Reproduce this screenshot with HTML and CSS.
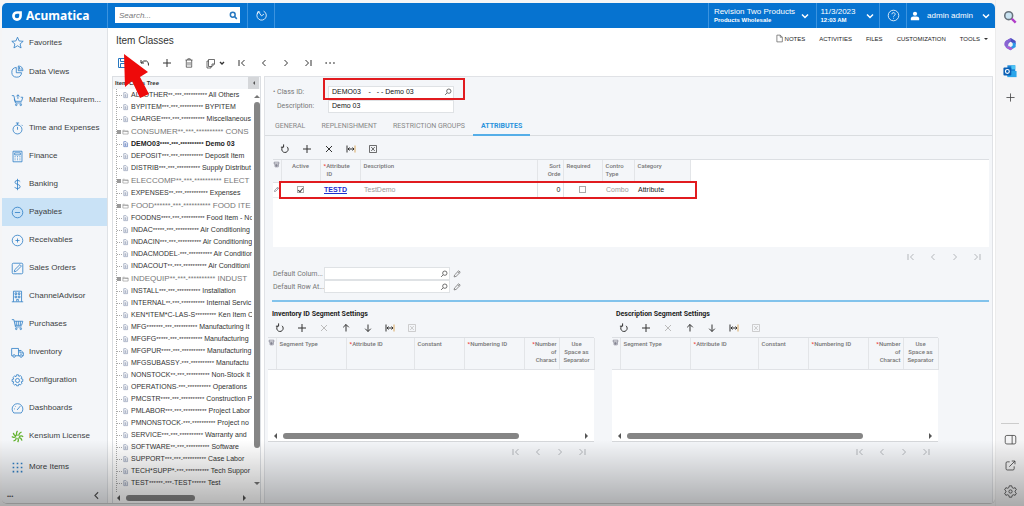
FILE: index.html
```
<!DOCTYPE html>
<html lang="en">
<head>
<meta charset="utf-8">
<title>Item Classes - Acumatica</title>
<link rel="stylesheet" href="styles.css">
</head>
<body>
<svg class="sprite" aria-hidden="true">
  <symbol id="plus" viewBox="0 0 12 12"><path d="M6 2v8M2 6h8"/></symbol>
  <symbol id="cross" viewBox="0 0 12 12"><path d="M3 3l6 6M9 3l-6 6"/></symbol>
  <symbol id="refresh" viewBox="0 0 12 12"><path d="M4.2 3.6a3.2 3.2 0 1 0 3.8.2M4.6 1.4v2.8H1.9"/></symbol>
  <symbol id="up" viewBox="0 0 12 12"><path d="M6 9.5v-7M3.2 5.3L6 2.5l2.800 2.800"/></symbol>
  <symbol id="down" viewBox="0 0 12 12"><path d="M6 2.500v7M3.200 6.700L6 9.500l2.800-2.800"/></symbol>
  <symbol id="fit" viewBox="0 0 12 12"><path d="M2 2.500v7M3 6h6M4.500 4.500L3 6l1.500 1.500M7.500 4.500L9 6 7.500 7.500"/><path class="amber" d="M10 2.500v7"/></symbol>
  <symbol id="excel" viewBox="0 0 12 12"><path stroke-width=".7" d="M2.500 2.500h7v7h-7zM4.200 4l3.600 4M7.800 4L4.200 8"/></symbol>
  <symbol id="first" viewBox="0 0 12 12"><path d="M3 3v6M8.500 3l-3 3 3 3"/></symbol>
  <symbol id="prev" viewBox="0 0 12 12"><path d="M7.500 3l-3 3 3 3"/></symbol>
  <symbol id="next" viewBox="0 0 12 12"><path d="M4.500 3l3 3-3 3"/></symbol>
  <symbol id="last" viewBox="0 0 12 12"><path d="M9 3v6M3.500 3l3 3-3 3"/></symbol>
  <symbol id="chev" viewBox="0 0 12 12"><path d="M3 4.500l3 3 3-3"/></symbol>
  <symbol id="lens" viewBox="0 0 12 12"><circle cx="7" cy="5" r="2.600"/><path d="M5 7L2.500 9.500"/></symbol>
  <symbol id="pencil" viewBox="0 0 12 12"><path d="M2.500 9.500l.6-2.400 5-5 1.800 1.800-5 5zM7 3.200L8.800 5"/></symbol>
  <symbol id="doc" viewBox="0 0 12 12"><path d="M3 2h4l2.500 2.500V10.500H3zM4.500 5.500h3M4.500 7h3M4.500 8.500h3"/></symbol>
  <symbol id="folder" viewBox="0 0 12 12"><path d="M1.500 3h3l1 1.200h5v5.300h-9zM1.500 5.200h9"/></symbol>
  <symbol id="rows" viewBox="0 0 12 12"><path d="M2 2h8v3H2zM3.500 5v5H9V5M3.500 7.500H9M6 5v5"/></symbol>
  <symbol id="cart" viewBox="0 0 16 16"><path d="M1 2h2.500l2 9h7.500M4 4h10.500l-1.500 5H5.200M6.500 4v5M9 4v5M11.500 4v5"/><circle cx="6.500" cy="13.300" r="1"/><circle cx="12" cy="13.300" r="1"/></symbol>
</svg>

<div class="app">
  <header class="topbar">
    <a class="brand" href="#">
      <svg viewBox="0 0 16 16"><path fill="#fff" fill-rule="evenodd" d="M8 1.500h6.500V8A6.500 6.500 0 1 1 8 1.500zM8 5a3 3 0 1 0 0 6h0a3 3 0 0 0 3-3V5z"/></svg>Acumatica</a>
    <form class="search" role="search">
      <input type="text" placeholder="Search..." aria-label="Search">
      <svg class="ic blue" viewBox="0 0 12 12"><circle cx="5" cy="5" r="3.200"/><path d="M7.500 7.500L10.500 10.500"/></svg>
    </form>
    <button class="top-cell recent" aria-label="Recent"><svg class="ic16" viewBox="0 0 16 16"><path d="M4 3.800A5.800 5.800 0 1 0 10.500 2.600M8 8.500L4.200 3.200M8 8.500l3-2.200M3 6.200l.6-3.100 2.800.8"/></svg></button>
    <span class="spacer"></span>
    <button class="top-cell company"><span class="two">Revision Two Products<small>Products Wholesale</small></span><svg class="ic"><use href="#chev"/></svg></button>
    <button class="top-cell date"><span class="two">11/3/2023<small>12:03 AM</small></span><svg class="ic"><use href="#chev"/></svg></button>
    <button class="top-cell help" aria-label="Help"><svg class="ic16" viewBox="0 0 16 16"><circle cx="8" cy="8" r="6.500"/><path d="M6 6.500a2 2 0 1 1 3 1.700q-1 .6-1 1.300M8 10.800v1"/></svg></button>
    <button class="top-cell user"><svg class="person" viewBox="0 0 12 12"><circle cx="6" cy="3.300" r="2.500"/><path d="M1 11V9q0-2 3-2.300h4q3 .3 3 2.300v2z"/></svg><span>admin admin</span><svg class="ic"><use href="#chev"/></svg></button>
  </header>

  <div class="body">
    <nav class="nav">
      <a class="tall" href="#"><svg viewBox="0 0 16 16"><path d="M8 1.500l2 4.600 5 .4-3.800 3.300 1.200 4.900L8 12l-4.400 2.700 1.200-4.900L1 6.500l5-.4z"/></svg>Favorites</a>
      <a class="tall" href="#"><svg viewBox="0 0 16 16"><path d="M6.500 3A6 6 0 1 0 13 9.500H6.500z"/><path d="M9 1.200V7h5.700A6 6 0 0 0 9 1.200z"/><path d="M10.500 2.500v3M12.500 4v2"/></svg>Data Views</a>
      <a href="#"><svg viewBox="0 0 16 16"><path d="M1 2h2.500l2 9h7.500M4 6l.8 3H13l1.500-5H12"/><circle cx="6.500" cy="13.300" r="1"/><circle cx="12" cy="13.300" r="1"/><path d="M8.500 1v5M6.500 3L8.500 1l2 2"/></svg>Material Requirem...</a>
      <a href="#"><svg viewBox="0 0 16 16"><circle cx="8" cy="9.200" r="5.500"/><path d="M6 1.200h4M8 1.200v2.500M8 6v3.500M13 3.500l1.200 1.200"/></svg>Time and Expenses</a>
      <a href="#"><svg viewBox="0 0 16 16"><path d="M2.500 1.500h11v13h-11zM4.500 3.500h7v2.500h-7zM4.500 8h1M7.500 8h1M10.500 8h1M4.500 10h1M7.500 10h1M10.500 10h1M4.500 12h1M7.500 12h1M10.500 12h1"/></svg>Finance</a>
      <a href="#"><svg viewBox="0 0 16 16"><path d="M11.300 4.500Q10.500 3 8 3 5 3 4.900 5.200 5 7.200 8 7.800t3.300 2.800Q11.200 13 8 13q-2.700 0-3.500-2M8 1v14"/></svg>Banking</a>
      <a class="active" href="#"><svg viewBox="0 0 16 16"><circle cx="8" cy="8" r="6.500"/><path d="M4.800 8h6.400"/></svg>Payables</a>
      <a href="#"><svg viewBox="0 0 16 16"><circle cx="8" cy="8" r="6.500"/><path d="M5.500 8h5M8 5.500v5"/></svg>Receivables</a>
      <a href="#"><svg viewBox="0 0 16 16"><rect x="1.500" y="1.500" width="13" height="13" rx="1.500"/><path d="M4 12l.6-2.500L11 3.200 12.800 5l-6.300 6.400z"/></svg>Sales Orders</a>
      <a href="#"><svg viewBox="0 0 16 16"><path d="M3 14.500v-13h10v13M1 14.500h14M5 3.500h2v2H5zM9 3.500h2v2H9zM5 7.500h2v2H5zM9 7.500h2v2H9zM7 14v-2.500h2V14"/></svg>ChannelAdvisor</a>
      <a href="#"><svg><use href="#cart"/></svg>Purchases</a>
      <a href="#"><svg viewBox="0 0 16 16"><path d="M2 12H.8V3h8.400v9H5.500M9.200 5.500h3.300L15.200 8.500V12h-1.200M10.800 12H9M11 5.500V8.500h4"/><circle cx="3.800" cy="12.300" r="1.600"/><circle cx="12.400" cy="12.300" r="1.600"/></svg>Inventory</a>
      <a href="#"><svg viewBox="0 0 16 16"><circle cx="8" cy="8" r="2.500"/><path d="M6.800 1h2.400l.5 2 1.800-1 1.900 1.800-1 1.900 2.100.6v2.800l-2 .5 1 1.800-1.900 2-1.900-1.100-.5 2.200H6.800l-.6-2-1.800 1-2-1.900 1.100-1.900-2.200-.5V6.800l2.100-.6-1-1.800 1.900-1.900L6.200 3.300z"/></svg>Configuration</a>
      <a href="#"><svg viewBox="0 0 16 16"><path d="M3.500 13.500a6.600 6.600 0 1 1 9 0zM7.500 9.800L11.500 5M3.800 8.500h1M5 5l.7.7"/></svg>Dashboards</a>
      <a href="#"><svg class="kensium" viewBox="0 0 16 16"><path d="M8 7Q5.500 4.500 8 1M9.500 7Q9.500 4 13 2.500M10 8.500q2.500-2.300 5-.2M9.300 9.500q3.200 0 4.200 3.500M8 10q2.200 2.200.2 5M6.500 9.500q0 3-3.500 4M6 8Q3.500 10 1 8M6.700 7Q3.500 7 2.800 3.500"/></svg>Kensium License</a>
      <a class="more" href="#"><svg class="dots" viewBox="0 0 16 16"><path d="M2 3h2M7 3h2M12 3h2M2 8h2M7 8h2M12 8h2M2 13h2M7 13h2M12 13h2"/></svg>More Items</a>
      <div class="nav-foot"><button aria-label="Options">•••</button><button aria-label="Collapse"><svg class="ic"><use href="#prev"/></svg></button></div>
    </nav>

    <main class="main">
      <div class="title-row">
        <h1>Item Classes</h1>
        <div class="links">
          <button><svg class="note" viewBox="0 0 12 12"><path d="M2.500 1.500H7L9.800 4.300V10.500H2.500zM7 1.500v2.800h2.800"/></svg>NOTES</button>
          <button>ACTIVITIES</button><button>FILES</button><button>CUSTOMIZATION</button><button>TOOLS <i class="caret"></i></button>
        </div>
      </div>
      <div class="toolbar page-tools">
        <button aria-label="Save"><svg class="ic blue" viewBox="0 0 12 12"><path d="M1.500 1.500h9v9h-9zM3.500 1.500v3h5v-3M3.500 10.500v-4h5v4"/></svg></button>
        <button aria-label="Undo"><svg class="ic" viewBox="0 0 12 12"><path d="M2 3v3h3M2.200 6Q4.500 3 7.500 4q2.500 1 2 4.500"/></svg></button>
        <button aria-label="Add"><svg class="ic"><use href="#plus"/></svg></button>
        <button aria-label="Delete"><svg class="ic thin" viewBox="0 0 12 12"><path d="M2.500 3h7M4.800 3V1.800h2.400V3M3.300 3v7.200h5.400V3M5 5v3.500M7 5v3.500"/></svg></button>
        <button class="copy" aria-label="Copy"><svg class="ic thin" viewBox="0 0 12 12"><path d="M3.500 2.500h6v4.500L7 9.500H3.500zM9.500 7H7v2.500M3.500 4H2v7h4V9.500"/></svg><svg class="ic8"><use href="#chev"/></svg></button>
        <button aria-label="First"><svg class="ic"><use href="#first"/></svg></button>
        <button aria-label="Previous"><svg class="ic"><use href="#prev"/></svg></button>
        <button aria-label="Next"><svg class="ic"><use href="#next"/></svg></button>
        <button aria-label="Last"><svg class="ic"><use href="#last"/></svg></button>
        <button aria-label="More"><svg class="ic" viewBox="0 0 12 12"><path stroke-width="1.300" d="M1.500 6h1.300M5.400 6h1.300M9.300 6h1.300"/></svg></button>
        <svg class="pointer" viewBox="0 0 26 44"><path d="M1 0L25 18l-8 5 9 17-9 4-8-17-7 6z"/></svg>
      </div>

      <div class="panes">
        <section class="tree">
          <div class="tree-head"><h2>Item Class Tree</h2><button aria-label="Collapse tree"><i class="tri left"></i></button></div>
          <div class="tree-body">
            <ul>
              <li><svg><use href="#doc"/></svg>ALLOTHER<span>**-***-**********</span> All Others</li>
              <li><svg><use href="#doc"/></svg>BYPITEM<span>***-***-**********</span> BYPITEM</li>
              <li><svg><use href="#doc"/></svg>CHARGE<span>****-***-**********</span> Miscellaneous</li>
              <li class="dir"><svg><use href="#folder"/></svg>CONSUMER<span>**-***-**********</span> CONS</li>
              <li class="sel"><svg><use href="#doc"/></svg>DEMO03<span>****-***-**********</span> Demo 03</li>
              <li><svg><use href="#doc"/></svg>DEPOSIT<span>***-***-**********</span> Deposit Item</li>
              <li><svg><use href="#doc"/></svg>DISTRIB<span>***-***-**********</span> Supply Distribut</li>
              <li class="dir"><svg><use href="#folder"/></svg>ELECCOMP<span>**-***-**********</span> ELECT</li>
              <li><svg><use href="#doc"/></svg>EXPENSES<span>**-***-**********</span> Expenses</li>
              <li class="dir"><svg><use href="#folder"/></svg>FOOD<span>******-***-**********</span> FOOD ITE</li>
              <li><svg><use href="#doc"/></svg>FOODNS<span>****-***-**********</span> Food Item - No</li>
              <li><svg><use href="#doc"/></svg>INDAC<span>*****-***-**********</span> Air Conditioning</li>
              <li><svg><use href="#doc"/></svg>INDACIN<span>***-***-**********</span> Air Conditioning</li>
              <li><svg><use href="#doc"/></svg>INDACMODEL<span>-***-**********</span> Air Condition</li>
              <li><svg><use href="#doc"/></svg>INDACOUT<span>**-***-**********</span> Air Conditioni</li>
              <li class="dir"><svg><use href="#folder"/></svg>INDEQUIP<span>**-***-**********</span> INDUST</li>
              <li><svg><use href="#doc"/></svg>INSTALL<span>***-***-**********</span> Installation</li>
              <li><svg><use href="#doc"/></svg>INTERNAL<span>**-***-**********</span> Internal Servic</li>
              <li><svg><use href="#doc"/></svg>KEN*ITEM*C-LAS-S<span>*********</span> Ken Item C</li>
              <li><svg><use href="#doc"/></svg>MFG<span>*******-***-**********</span> Manufacturing It</li>
              <li><svg><use href="#doc"/></svg>MFGFG<span>*****-***-**********</span> Manufacturing</li>
              <li><svg><use href="#doc"/></svg>MFGPUR<span>****-***-**********</span> Manufacturing</li>
              <li><svg><use href="#doc"/></svg>MFGSUBASSY<span>-***-**********</span> Manufactu</li>
              <li><svg><use href="#doc"/></svg>NONSTOCK<span>**-***-**********</span> Non-Stock It</li>
              <li><svg><use href="#doc"/></svg>OPERATIONS<span>-***-**********</span> Operations</li>
              <li><svg><use href="#doc"/></svg>PMCSTR<span>****-***-**********</span> Construction P</li>
              <li><svg><use href="#doc"/></svg>PMLABOR<span>***-***-**********</span> Project Labor</li>
              <li><svg><use href="#doc"/></svg>PMNONSTOCK<span>-***-**********</span> Project no</li>
              <li><svg><use href="#doc"/></svg>SERVICE<span>***-***-**********</span> Warranty and</li>
              <li><svg><use href="#doc"/></svg>SOFTWARE<span>**-***-**********</span> Software</li>
              <li><svg><use href="#doc"/></svg>SUPPORT<span>***-***-**********</span> Case Labor</li>
              <li><svg><use href="#doc"/></svg>TECH*SUPP*<span>-***-**********</span> Tech Suppor</li>
              <li><svg><use href="#doc"/></svg>TEST<span>******-***-</span>TEST<span>******</span> Test</li>
              <li><svg><use href="#doc"/></svg>TRAINING<span>**-***-**********</span> Customer Tr</li>
            </ul>
            <div class="vscroll"><i class="tri up"></i><b></b><i class="tri down"></i></div>
          </div>
          <div class="hscroll tree-scroll"><i class="tri left"></i><b></b><i class="tri right"></i></div>
        </section>

        <section class="detail">
          <div class="fields">
            <div class="field"><label for="cid">• Class ID:</label><span class="box"><input id="cid" value="DEMO03    -   - - Demo 03"><svg class="ic"><use href="#lens"/></svg><em class="mark"></em></span></div>
            <div class="field"><label for="desc">Description:</label><span class="box"><input id="desc" value="Demo 03"></span></div>
          </div>
          <div class="tabs" role="tablist">
            <button role="tab">GENERAL</button><button role="tab">REPLENISHMENT</button><button role="tab">RESTRICTION GROUPS</button><button role="tab" class="on" aria-selected="true">ATTRIBUTES</button>
          </div>
          <div class="attributes">
            <div class="toolbar">
              <button aria-label="Refresh"><svg class="ic"><use href="#refresh"/></svg></button>
              <button aria-label="Add row"><svg class="ic"><use href="#plus"/></svg></button>
              <button aria-label="Delete row"><svg class="ic"><use href="#cross"/></svg></button>
              <button aria-label="Fit columns"><svg class="ic"><use href="#fit"/></svg></button>
              <button aria-label="Export"><svg class="ic"><use href="#excel"/></svg></button>
            </div>
            <div class="sheet attr-sheet">
              <table class="attr-table">
                <colgroup><col class="w8"><col class="w39"><col class="w40"><col class="w177"><col class="w26"><col class="w39"><col class="w32"><col class="w56"></colgroup>
                <thead><tr><th class="pick"><svg><use href="#rows"/></svg></th><th class="mid">Active</th><th><u>*</u>Attribute<br>&nbsp; ID</th><th>Description</th><th class="num">Sort<br>Orde</th><th>Required</th><th>Contro<br>Type</th><th>Category</th></tr></thead>
                <tbody><tr><td class="pick"><svg><use href="#pencil"/></svg></td><td class="mid"><input type="checkbox" checked aria-label="Active"></td><td><a href="#">TESTD</a></td><td class="soft">TestDemo</td><td class="num cell">0</td><td class="mid"><input type="checkbox" aria-label="Required"></td><td class="soft">Combo</td><td>Attribute</td></tr></tbody>
              </table>
              <em class="mark"></em>
            </div>
            <div class="pager"><button aria-label="First"><svg class="ic"><use href="#first"/></svg></button><button aria-label="Previous"><svg class="ic"><use href="#prev"/></svg></button><button aria-label="Next"><svg class="ic"><use href="#next"/></svg></button><button aria-label="Last"><svg class="ic"><use href="#last"/></svg></button></div>
          </div>
          <div class="defaults">
            <div class="field"><label for="dc">Default Colum...</label><span class="box"><input id="dc"><svg class="ic"><use href="#lens"/></svg></span><button aria-label="Edit column"><svg class="ic"><use href="#pencil"/></svg></button></div>
            <div class="field"><label for="dr">Default Row At...</label><span class="box"><input id="dr"><svg class="ic"><use href="#lens"/></svg></span><button aria-label="Edit row"><svg class="ic"><use href="#pencil"/></svg></button></div>
          </div>
          <div class="segments">
            <section class="segment">
              <h2>Inventory ID Segment Settings</h2>
              <div class="toolbar">
                <button aria-label="Refresh"><svg class="ic"><use href="#refresh"/></svg></button><button aria-label="Add"><svg class="ic"><use href="#plus"/></svg></button><button disabled aria-label="Delete"><svg class="ic"><use href="#cross"/></svg></button><button aria-label="Move up"><svg class="ic"><use href="#up"/></svg></button><button aria-label="Move down"><svg class="ic"><use href="#down"/></svg></button><button aria-label="Fit columns"><svg class="ic"><use href="#fit"/></svg></button><button disabled aria-label="Export"><svg class="ic"><use href="#excel"/></svg></button>
              </div>
              <div class="sheet seg-sheet">
                <table class="seg-table">
                  <colgroup><col class="w8"><col class="w70"><col class="w68"><col class="w50"><col class="w60"><col class="w35"><col class="w35"></colgroup>
                  <thead><tr><th class="pick"><svg><use href="#rows"/></svg></th><th>Segment Type</th><th><u>*</u>Attribute ID</th><th>Constant</th><th><u>*</u>Numbering ID</th><th class="num"><u>*</u>Number<br>of<br>Charact</th><th class="mid">Use<br>Space as<br>Separator</th></tr></thead>
                </table>
                <div class="hscroll"><i class="tri left"></i><b></b><i class="tri right"></i></div>
              </div>
              <div class="pager"><button aria-label="First"><svg class="ic"><use href="#first"/></svg></button><button aria-label="Previous"><svg class="ic"><use href="#prev"/></svg></button><button aria-label="Next"><svg class="ic"><use href="#next"/></svg></button><button aria-label="Last"><svg class="ic"><use href="#last"/></svg></button></div>
            </section>
            <section class="segment">
              <h2>Description Segment Settings</h2>
              <div class="toolbar">
                <button aria-label="Refresh"><svg class="ic"><use href="#refresh"/></svg></button><button aria-label="Add"><svg class="ic"><use href="#plus"/></svg></button><button disabled aria-label="Delete"><svg class="ic"><use href="#cross"/></svg></button><button aria-label="Move up"><svg class="ic"><use href="#up"/></svg></button><button aria-label="Move down"><svg class="ic"><use href="#down"/></svg></button><button aria-label="Fit columns"><svg class="ic"><use href="#fit"/></svg></button><button disabled aria-label="Export"><svg class="ic"><use href="#excel"/></svg></button>
              </div>
              <div class="sheet seg-sheet">
                <table class="seg-table">
                  <colgroup><col class="w8"><col class="w70"><col class="w68"><col class="w50"><col class="w60"><col class="w35"><col class="w35"></colgroup>
                  <thead><tr><th class="pick"><svg><use href="#rows"/></svg></th><th>Segment Type</th><th><u>*</u>Attribute ID</th><th>Constant</th><th><u>*</u>Numbering ID</th><th class="num"><u>*</u>Number<br>of<br>Charact</th><th class="mid">Use<br>Space as<br>Separator</th></tr></thead>
                </table>
                <div class="hscroll"><i class="tri left"></i><b></b><i class="tri right"></i></div>
              </div>
              <div class="pager"><button aria-label="First"><svg class="ic"><use href="#first"/></svg></button><button aria-label="Previous"><svg class="ic"><use href="#prev"/></svg></button><button aria-label="Next"><svg class="ic"><use href="#next"/></svg></button><button aria-label="Last"><svg class="ic"><use href="#last"/></svg></button></div>
            </section>
          </div>
        </section>
      </div>
    </main>
  </div>
</div>

<aside class="edge">
  <button aria-label="Search"><svg viewBox="0 0 16 16"><circle cx="6.500" cy="6.500" r="4.500" fill="#c9e3f2" stroke="#68727c" stroke-width="1.800"/><path d="M10 10l4.500 4.500" stroke="#b03cc8" stroke-width="2.800"/></svg></button>
  <button aria-label="Microsoft 365"><svg viewBox="0 0 16 16"><path d="M9 1L3 4.500v7L8 8V5l4 2.500 2.500 1V4.500z" fill="#4a4fc4"/><path d="M3 4.500Q1 6 1.500 9.500L4 12l2-1.500V6.500L9 4V1z" fill="#8a63d2"/><path d="M14.500 7v4.500L8.500 15 3 12l3-1.500 3 1L11 10V6z" fill="#2d9ae8"/><path d="M3 12l5.500 3 3-2L7 10.500z" fill="#b05ad0"/><circle cx="8.300" cy="8.300" r="2.200" fill="#f5f5f6"/></svg></button>
  <button aria-label="Outlook"><svg viewBox="0 0 16 16"><path d="M5 1.500h9V14H5z" fill="#1a86d8"/><path d="M9.500 1.500H14V6H9.500z" fill="#4cc4f5"/><path d="M5 8l10.500 0V15H5z" fill="#2ba5ea"/><rect x=".5" y="4" width="9" height="9" rx="1" fill="#0a5fb4"/><circle cx="5" cy="8.500" r="2.200" fill="none" stroke="#fff" stroke-width="1.300"/></svg></button>
  <button aria-label="Add"><svg class="line" viewBox="0 0 16 16"><path d="M8 3v10M3 8h10"/></svg></button>
  <hr>
  <button aria-label="Split"><svg class="line" viewBox="0 0 16 16"><rect x="1.500" y="3" width="13" height="10.500" rx="2"/><path d="M10 3v10.500"/></svg></button>
  <button aria-label="Open"><svg class="line" viewBox="0 0 16 16"><path d="M7 3.500H4q-1.500 0-1.500 1.500v7q0 1.500 1.500 1.500h7q1.500 0 1.500-1.500V9M6.500 9.500l7-7M9.500 2.500h4v4"/></svg></button>
  <button aria-label="Settings"><svg class="line" viewBox="0 0 16 16"><circle cx="8" cy="8" r="2"/><path d="M6.500 1h3l.5 2.200 1.500.8 2.200-.7 1.500 2.600L13.500 7.500v1l1.700 1.600-1.500 2.600-2.200-.7-1.500.8-.5 2.200h-3L6 12.800l-1.500-.8-2.200.7L.8 10.100l1.700-1.600v-1L.8 5.900l1.500-2.600 2.200.7L6 3.200z"/></svg></button>
</aside>
<div class="fade"></div>
</body>
</html>
```
FILE: styles.css
```
* { box-sizing: border-box; }
body { margin: 0; height: 100vh; display: flex; overflow: hidden; position: relative; background: #f5f5f6; font-family: "Liberation Sans", Arial, sans-serif; font-size: 7px; line-height: 8px; color: #333; }
button { border: 0; padding: 0; margin: 0; background: none; font: inherit; color: inherit; display: flex; align-items: center; justify-content: center; }
input { font: inherit; color: inherit; border: 0; margin: 0; padding: 0; background: none; min-width: 0; }
h1, h2 { margin: 0; }
svg { flex: none; }
.sprite { display: none; }
.ic, .ic8 { width: 12px; height: 12px; fill: none; stroke: currentColor; stroke-width: 1; display: block; }
.ic8 { width: 8px; height: 8px; stroke-width: 2; }
.ic.thin { stroke-width: .7; }
.ic16 { width: 13px; height: 13px; fill: none; stroke: #fff; stroke-width: 1; }
.amber { stroke: #d9a860; }
.blue { color: #2878c0; }
.spacer { flex: 1; }

.app { flex: 1; min-width: 0; display: flex; flex-direction: column; margin: 3px 0 2px 2px; border-radius: 5px; overflow: hidden; background: #fff; border-bottom: 1px solid #ccc; }
.topbar { display: flex; height: 25px; flex: none; background: #0673d0; color: #fff; }
.brand { width: 106px; display: flex; align-items: center; gap: 3px; padding-left: 9px; color: #fff; text-decoration: none; font: bold 12px/14px "Noto Sans", sans-serif; border-right: 1px solid #3b93df; }
.brand svg { width: 12px; height: 12px; }
.search { display: flex; align-items: center; width: 125px; margin: 4px 7px 5px; padding: 0 2px 0 4px; background: #fff; }
.search input { flex: 1; font-style: italic; font-size: 8px; }
.search input::placeholder { color: #777; opacity: 1; }
.search .ic { stroke-width: 2; width: 9px; height: 9px; }
.top-cell { border-left: 1px solid #3b93df; gap: 4px; }
.recent { width: 28px; border-right: 1px solid #3b93df; }
.company { width: 108px; }
.date { width: 63px; gap: 8px; }
.help { width: 27px; }
.user { width: 89px; gap: 7px; font-size: 8px; }
.top-cell .ic { stroke-width: 1.5; }
.two { text-align: left; font-size: 8px; }
.two small { display: block; font-size: 6px; line-height: 8px; font-weight: bold; }
.person { width: 10px; height: 10px; fill: #fff; }

.body { flex: 1; display: flex; min-height: 0; }
.nav { width: 106px; flex: none; display: flex; flex-direction: column; background: #f4f6f9; border-right: 1px solid #dfe2e6; }
.nav a { display: flex; align-items: center; height: 28px; gap: 5px; padding-left: 9px; font-size: 8px; color: #3c3f43; text-decoration: none; white-space: nowrap; flex: none; }
.nav a.tall { height: 29px; }
.nav a.active { background: #c9e2f6; }
.nav a.more { margin-top: 3px; }
.nav svg { width: 13px; height: 13px; fill: none; stroke: #2f7fc6; stroke-width: 1; }
.nav .kensium { stroke: #62b22e; stroke-width: 1.500; }
.nav .dots { stroke-width: 2; }
.nav-foot { margin-top: auto; display: flex; justify-content: space-between; padding: 0 4px 1px 5px; color: #555; font-size: 6px; }
.nav-foot svg { stroke: #555; }

.main { flex: 1; min-width: 0; display: flex; flex-direction: column; padding: 0 2px 0 4px; }
.title-row { display: flex; justify-content: space-between; align-items: flex-start; height: 26px; padding: 6px 5px 0 4px; flex: none; }
h1 { font-size: 10px; line-height: 14px; font-weight: normal; color: #333; }
.links { display: flex; gap: 14px; font-size: 6px; }
.links button { gap: 1px; color: #222; }
.note { width: 9px; height: 9px; fill: none; stroke: #666; }
.caret { border: 2px solid transparent; border-top-color: #333; border-bottom: 0; margin-left: 3px; }
.toolbar { display: flex; align-items: center; gap: 10px; color: #333; }
.toolbar button { width: 12px; height: 12px; }
.toolbar button:disabled { color: #bbb; }
.page-tools { position: relative; height: 22px; padding: 0 0 5px 5px; flex: none; }
.page-tools .copy { width: 21px; gap: 1px; }
.pointer { position: absolute; left: 11px; top: 0; width: 26px; height: 44px; fill: #ee0a0a; z-index: 3; }

.panes { flex: 1; display: flex; gap: 3px; min-height: 0; }
.tree { width: 149px; flex: none; display: flex; flex-direction: column; border: 1px solid #dcdfe3; border-bottom: 0; }
.tree-head { display: flex; justify-content: space-between; height: 12px; flex: none; background: #f4f6f9; padding-left: 2px; }
.tree-head h2 { font-size: 6px; line-height: 12px; }
.tree-head button { width: 11px; background: #d5d7da; margin-right: 1px; }
.tree-body { flex: 1; display: flex; min-height: 0; }
.tree ul { flex: 1; margin: 0 1px 0 3px; padding: 0; min-width: 0; overflow: hidden; list-style: none; border-left: 1px dotted #aaa; }
.tree li { display: flex; align-items: center; height: 12px; white-space: pre; color: #333; }
.tree li::before { content: ""; width: 5px; border-top: 1px dotted #aaa; flex: none; }
.tree li svg { width: 7px; height: 8px; fill: none; stroke: #7d8ca8; stroke-width: 1; margin: 0 2px 0 0; }
.tree li span { font-size: 6px; }
.tree li.dir { height: 13px; font-size: 8px; color: #777; }
.tree li.dir span { font-size: 7px; }
.tree li.dir::before { width: 4px; height: 4px; background: #999; border: 0; margin-right: 1px; }
.tree li.dir svg { stroke: #888; }
.tree li.sel { font-weight: bold; color: #222; }
.tree li.sel svg { stroke: #3c5fae; }
.vscroll { width: 7px; display: flex; flex-direction: column; align-items: center; gap: 4px; padding: 6px 0 7px; }
.vscroll b { width: 6px; flex: 0 0 346px; background: #858585; border-radius: 3px; }
.vscroll .down { margin-top: auto; }
.hscroll { display: flex; align-items: center; height: 11px; gap: 6px; }
.hscroll b { height: 6px; background: #858585; border-radius: 3px; }
.hscroll .right { margin-left: auto; }
.tree-scroll { flex: none; padding: 0 14px 0 4px; }
.tree-scroll b { width: 69px; }
.tri { flex: none; border: 3px solid transparent; }
.tri.left { border-right-color: #555; border-left: 0; }
.tri.right { border-left-color: #555; border-right: 0; }
.tri.up { border-bottom-color: #777; border-top: 0; }
.tri.down { border-top-color: #777; border-bottom: 0; }
.tree-head .tri { border-width: 2px; border-left: 0; }

.detail { flex: 1; min-width: 0; background: #f4f6f9; border: 1px solid #e0e2e6; border-bottom: 0; font-family: Roboto, "Liberation Sans", sans-serif; color: #666; }
.fields { padding: 8px 0 0 7px; }
.field { display: flex; align-items: center; height: 14px; }
.field label { width: 56px; color: #777; white-space: nowrap; }
.fields .field label { padding-left: 1px; }
.fields .field + .field label { padding-left: 5px; }
.box { position: relative; display: flex; align-items: center; width: 126px; height: 13px; background: #fff; border: 1px solid #dfe2e5; padding-left: 3px; }
.box input { flex: 1; width: 100%; color: #111; font-family: "Liberation Sans", sans-serif; font-size: 7px; white-space: pre; }
.box .ic { color: #555; width: 10px; height: 10px; }
.mark { position: absolute; border: 2px solid #e11b1f; pointer-events: none; }
.box .mark { left: -6px; top: -9px; right: -12px; bottom: -2px; }
.tabs { display: flex; height: 23px; gap: 16px; padding: 3px 10px 0; border-bottom: 1px solid #dadde0; }
.tabs button { color: #888; margin-bottom: -1px; }
.tabs button.on { color: #2a93dc; font-weight: bold; border-bottom: 2px solid #55aee8; padding: 2px 8px 0; margin-left: -8px; }
.attributes { padding: 0 3px 0 8px; }
.attributes .toolbar { height: 23px; padding: 3px 0 0 6px; }
.sheet { position: relative; background: #fff; border-top: 1px solid #dcdfe3; }
.attr-sheet { height: 88px; }
table { border-collapse: collapse; table-layout: fixed; }
.attr-table { width: 417px; }
.seg-table { width: 100%; }
.w8 { width: 8px; } .w39 { width: 39px; } .w40 { width: 40px; } .w177 { width: 177px; } .w26 { width: 26px; } .w32 { width: 32px; } .w56 { width: 56px; }
.w70 { width: 70px; } .w68 { width: 68px; } .w50 { width: 50px; } .w60 { width: 60px; } .w35 { width: 35px; }
th, td { padding: 2px 3px; text-align: left; vertical-align: top; white-space: nowrap; }
th { font-size: 6px; font-weight: 500; color: #777; background: #f4f6f9; border-right: 1px solid #e3e5e8; border-bottom: 1px solid #e0e2e6; }
.attr-table th { height: 22px; }
.seg-table th { height: 31px; }
.attr-table td { height: 15px; padding: 3px 4px; vertical-align: middle; color: #222; font-family: "Liberation Sans", sans-serif; border-bottom: 1px solid #eceef0; }
.attr-table td.soft { color: #999; }
.attr-table td.cell { border: 1px solid #dfe2e5; }
th u { color: #e33; text-decoration: none; }
td a { color: #1c2fd0; font-weight: bold; }
th.mid, td.mid { text-align: center; }
th.num, td.num { text-align: right; padding-right: 2px; }
.seg-table th.mid { padding: 2px 0; }
th.pick, .attr-table td.pick { padding: 1px 0; }
.pick svg { width: 7px; height: 7px; fill: none; stroke: #667; display: block; }
input[type=checkbox] { appearance: none; width: 7px; height: 7px; border: 1px solid #aaa; display: block; margin: 0 auto; background: #fff; }
input[type=checkbox]:checked::after { content: ""; display: block; width: 2px; height: 4px; margin: 0 auto; border: solid #444; border-width: 0 1px 1px 0; transform: rotate(40deg); }
.attr-sheet .mark { left: 6px; top: 21px; width: 418px; height: 18px; }
.pager { display: flex; justify-content: flex-end; gap: 10px; padding: 4px 6px 4px 0; color: #b4b7bb; }
.defaults { margin: 0 3px 0 7px; height: 35px; border-bottom: 2px solid #82c3ec; }
.defaults .field { height: 13px; padding-left: 1px; }
.defaults .field label { width: 51px; }
.defaults button { margin-left: 2px; color: #777; }
.defaults button .ic { width: 10px; height: 10px; }
.segments { display: flex; gap: 18px; padding: 7px 0 0 3px; }
.segment { flex: 0 1 326px; min-width: 0; }
.segment h2 { font-size: 7px; line-height: 10px; padding-left: 4px; color: #222; }
.segment .toolbar { height: 18px; padding-left: 6px; }
.seg-sheet { height: 105px; display: flex; flex-direction: column; border-bottom: 1px solid #d5d7da; }
.seg-sheet .hscroll { margin-top: auto; padding: 0 6px; flex: none; }
.seg-sheet .hscroll b { width: 75%; }

.edge { width: 29px; flex: none; display: flex; flex-direction: column; align-items: center; padding: 10px 0 8px; gap: 13px; border-left: 1px solid #ececec; }
.edge svg { width: 14px; height: 14px; display: block; }
.edge .line { fill: none; stroke: #444; stroke-width: 1; width: 13px; height: 13px; }
.edge hr { width: 18px; border: 0; border-top: 1px solid #ccc; margin: auto 0 -4px; }
.fade { position: absolute; left: 0; right: 0; bottom: 0; height: 66px; pointer-events: none; background: linear-gradient(transparent, rgba(0, 0, 0, .3)); z-index: 5; }
```
